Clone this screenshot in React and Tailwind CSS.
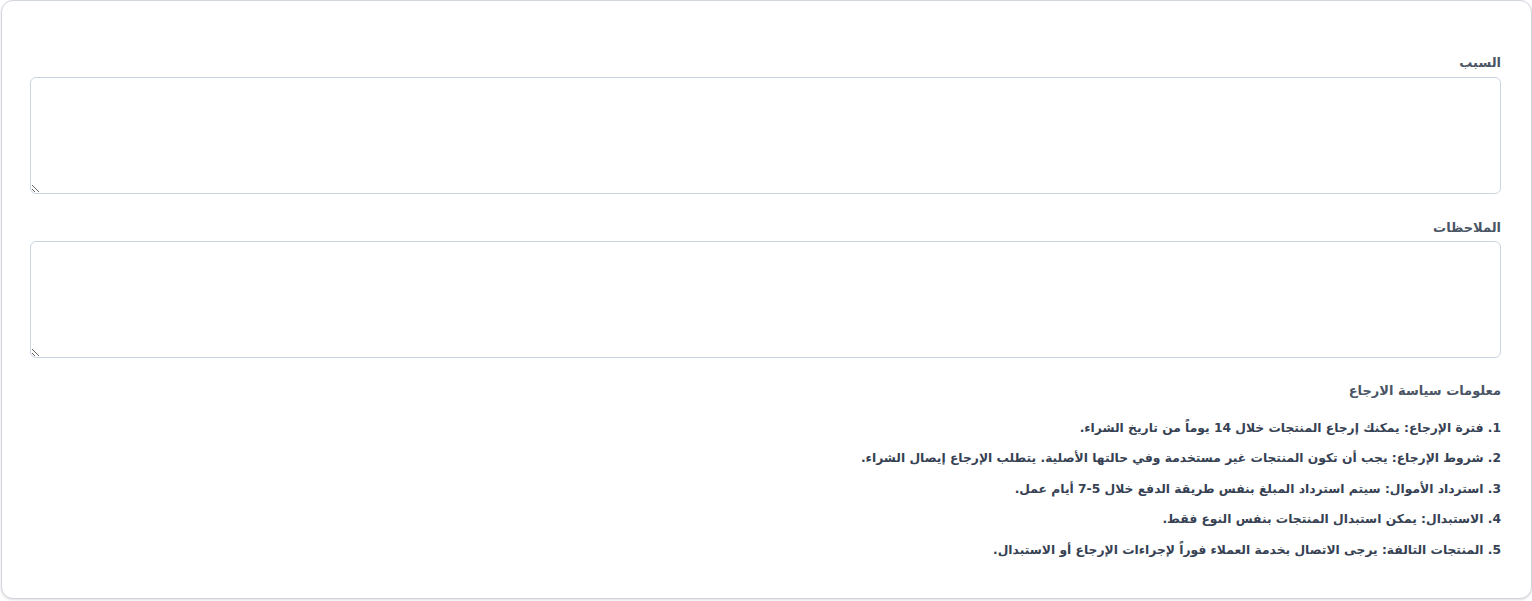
import React from "react";

const policy = [
  "1. فترة الإرجاع: يمكنك إرجاع المنتجات خلال 14 يوماً من تاريخ الشراء.",
  "2. شروط الإرجاع: يجب أن تكون المنتجات غير مستخدمة وفي حالتها الأصلية. يتطلب الإرجاع إيصال الشراء.",
  "3. استرداد الأموال: سيتم استرداد المبلغ بنفس طريقة الدفع خلال 5-7 أيام عمل.",
  "4. الاستبدال: يمكن استبدال المنتجات بنفس النوع فقط.",
  "5. المنتجات التالفة: يرجى الاتصال بخدمة العملاء فوراً لإجراءات الإرجاع أو الاستبدال.",
];

export default function App() {
  return (
    <div
      dir="rtl"
      className="bg-white min-h-[601px]"
      style={{ fontFamily: '"DejaVu Sans", "Noto Sans", sans-serif' }}
    >
      <div className="w-[1531px] h-[599px] rounded-xl border border-gray-300 bg-white pl-[28px] pr-[30px] pt-[52px] shadow-sm">
        {/* Reason */}
        <label className="block text-[13px] font-bold text-gray-600 mb-[4px]">السبب</label>
        <textarea className="block w-full h-[117px] rounded-md border border-slate-300 bg-white" />

        {/* Notes */}
        <label className="block text-[13px] font-bold text-gray-600 mt-[24px] mb-[4px]">الملاحظات</label>
        <textarea className="block w-full h-[117px] rounded-md border border-slate-300 bg-white" />

        {/* Policy */}
        <h3 className="text-[13px] font-bold text-gray-600 mt-[23px] mb-[18px]">معلومات سياسة الارجاع</h3>
        <ul className="flex flex-col gap-[11.5px]">
          {policy.map((p) => (
            <li key={p} className="text-[12.3px] font-bold text-gray-700 leading-[19px]">
              {p}
            </li>
          ))}
        </ul>
      </div>
    </div>
  );
}
